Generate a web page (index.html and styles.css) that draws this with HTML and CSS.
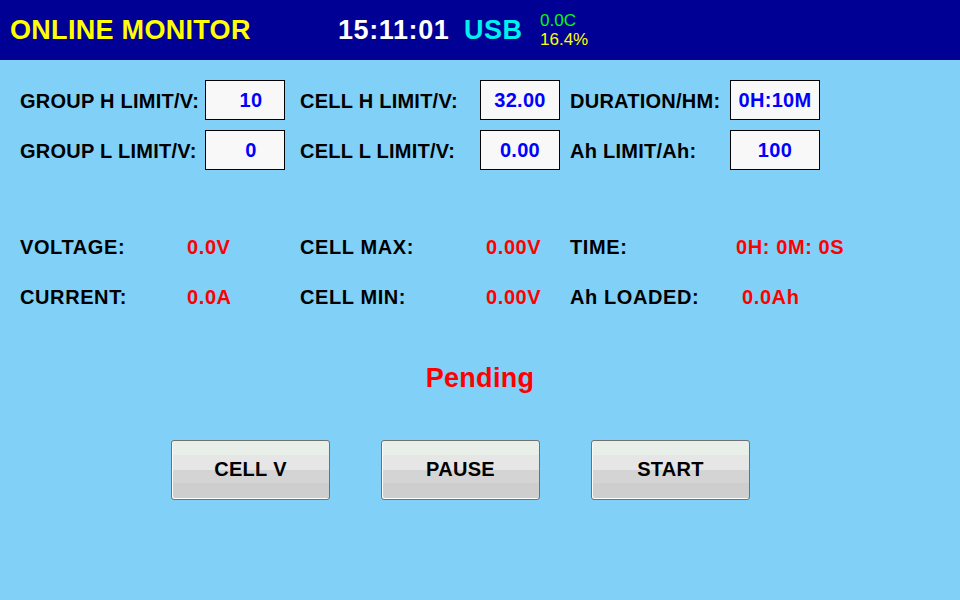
FILE: index.html
```html
<!DOCTYPE html>
<html>
<head>
<meta charset="utf-8">
<link rel="stylesheet" href="styles.css">
</head>
<body>
<header class="topbar">
  <div class="title">ONLINE MONITOR</div>
  <div class="clock">15:11:01</div>
  <div class="usb">USB</div>
  <div class="mini">
    <div class="temp">0.0C</div>
    <div class="pct">16.4%</div>
  </div>
</header>
<main class="panel">
  <section class="limits">
    <div class="lbl">GROUP H LIMIT/V:</div>
    <div class="box grp">10</div>
    <div class="lbl c2">CELL H LIMIT/V:</div>
    <div class="box">32.00</div>
    <div class="lbl c3">DURATION/HM:</div>
    <div class="box">0H:10M</div>

    <div class="lbl">GROUP L LIMIT/V:</div>
    <div class="box grp">0</div>
    <div class="lbl c2">CELL L LIMIT/V:</div>
    <div class="box">0.00</div>
    <div class="lbl c3">Ah LIMIT/Ah:</div>
    <div class="box">100</div>
  </section>

  <section class="readings">
    <div class="rl">VOLTAGE:</div>
    <div class="rv">0.0V</div>
    <div class="rl">CELL MAX:</div>
    <div class="rv">0.00V</div>
    <div class="rl">TIME:</div>
    <div class="rv">0H: 0M: 0S</div>

    <div class="rl">CURRENT:</div>
    <div class="rv">0.0A</div>
    <div class="rl">CELL MIN:</div>
    <div class="rv">0.00V</div>
    <div class="rl">Ah LOADED:</div>
    <div class="rv shift">0.0Ah</div>
  </section>

  <div class="status">Pending</div>

  <div class="actions">
    <button class="btn">CELL V</button>
    <button class="btn">PAUSE</button>
    <button class="btn">START</button>
  </div>
</main>
</body>
</html>
```
FILE: styles.css
```css
html, body {
  margin: 0;
  padding: 0;
}
body {
  width: 960px;
  height: 600px;
  overflow: hidden;
  background: #80d0f8;
  font-family: "Liberation Sans", Arial, sans-serif;
  font-weight: bold;
}
.topbar {
  height: 60px;
  box-sizing: border-box;
  background: #000094;
  display: flex;
  align-items: center;
  padding: 0 0 0 10px;
}
.title {
  color: #ffff00;
  font-size: 27px;
  line-height: 30px;
  letter-spacing: 0.3px;
  width: 328px;
}
.clock {
  color: #ffffff;
  font-size: 27px;
  line-height: 30px;
  letter-spacing: 0.6px;
  width: 126px;
}
.usb {
  color: #00f0f0;
  font-size: 27px;
  line-height: 30px;
  letter-spacing: 0.5px;
  width: 76px;
}
.mini {
  font-weight: normal;
  font-size: 17px;
  line-height: 19px;
  padding-bottom: 1px;
}
.temp { color: #00ff00; }
.pct { color: #ffff00; }

.panel {
  padding: 20px 0 0 20px;
}
.limits {
  display: grid;
  grid-template-columns: 185px 80px 195px 80px 170px 90px;
  grid-auto-rows: 40px;
  row-gap: 10px;
  align-items: center;
}
.lbl {
  font-size: 20px;
  color: #000;
  padding-top: 3px;
  letter-spacing: 0.25px;
  white-space: nowrap;
}
.lbl.c2 { padding-left: 15px; }
.lbl.c3 { padding-left: 10px; }
.box {
  box-sizing: border-box;
  height: 40px;
  border: 1px solid #000;
  background: #f8f8f8;
  color: #0000ff;
  font-size: 20px;
  line-height: 38px;
  letter-spacing: 0.3px;
  text-align: center;
}
.box.grp { padding-left: 12px; }

.readings {
  margin-top: 52px;
  display: grid;
  grid-template-columns: 167px 113px 186px 84px 166px 120px;
  grid-auto-rows: 50px;
  align-items: center;
  font-size: 20px;
  letter-spacing: 0.6px;
}
.rl { color: #000; white-space: nowrap; }
.rv { color: #ff0000; white-space: nowrap; }
.rv.shift { padding-left: 6px; }

.status {
  margin: 36px 0 0 -20px;
  text-align: center;
  color: #ff0000;
  font-size: 27px;
  line-height: 40px;
  letter-spacing: 0.3px;
}
.actions {
  margin-top: 42px;
  padding-left: 151px;
  display: flex;
  gap: 51px;
}
.btn {
  width: 159px;
  height: 60px;
  box-sizing: border-box;
  border: 1px solid #707070;
  border-radius: 3px;
  box-shadow: inset 1px -1px 0 #ffffff;
  background: linear-gradient(to bottom,
    #e8eee8 0, #e8eee8 14px,
    #e6e6e6 14px, #e6e6e6 29px,
    #d4d4d4 29px, #d4d4d4 42px,
    #cecece 42px, #cecece 100%);
  font-family: "Liberation Sans", Arial, sans-serif;
  font-weight: bold;
  font-size: 20px;
  letter-spacing: 0.3px;
  color: #000;
  padding: 0 0 2px 0;
}
```
